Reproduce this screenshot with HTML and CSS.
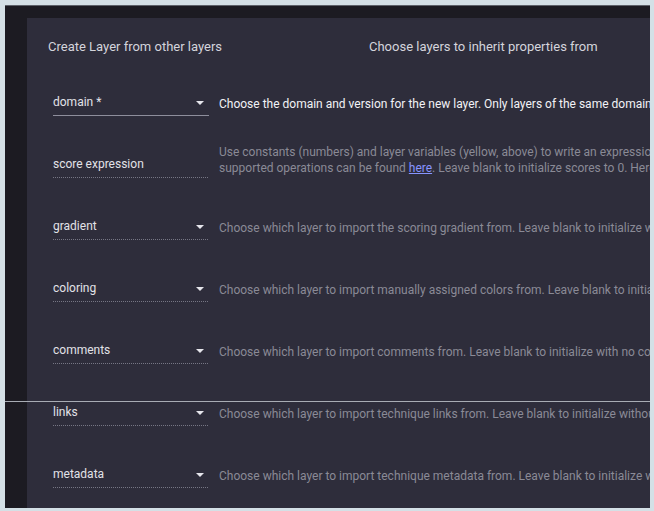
FILE: index.html
```html
<!DOCTYPE html>
<html>
<head>
<meta charset="utf-8">
<link rel="stylesheet" href="styles.css">
</head>
<body>
<div class="frame">
  <div class="card">
    <div class="header">
      <div class="title">Create Layer from other layers</div>
      <div class="subtitle">Choose layers to inherit properties from</div>
    </div>
    <div class="row">
      <div class="select solid"><span class="lbl">domain *</span><span class="arrow"></span></div>
      <div class="desc strong">Choose the domain and version for the new layer. Only layers of the same domain and version can be used to initialize the new layer.</div>
    </div>
    <div class="row">
      <div class="select dotted"><span class="lbl">score expression</span></div>
      <div class="desc two">Use constants (numbers) and layer variables (yellow, above) to write an expression to initialize scores in the new layer. A full list of<br>supported operations can be found <a class="link" href="#">here</a>. Leave blank to initialize scores to 0. Here is an example expression.</div>
    </div>
    <div class="row">
      <div class="select dotted"><span class="lbl">gradient</span><span class="arrow"></span></div>
      <div class="desc">Choose which layer to import the scoring gradient from. Leave blank to initialize with the default scoring gradient.</div>
    </div>
    <div class="row">
      <div class="select dotted"><span class="lbl">coloring</span><span class="arrow"></span></div>
      <div class="desc">Choose which layer to import manually assigned colors from. Leave blank to initialize with no colors.</div>
    </div>
    <div class="row">
      <div class="select dotted"><span class="lbl">comments</span><span class="arrow"></span></div>
      <div class="desc">Choose which layer to import comments from. Leave blank to initialize with no comments.</div>
    </div>
    <div class="row">
      <div class="select dotted"><span class="lbl">links</span><span class="arrow"></span></div>
      <div class="desc">Choose which layer to import technique links from. Leave blank to initialize without links.</div>
    </div>
    <div class="row">
      <div class="select dotted"><span class="lbl">metadata</span><span class="arrow"></span></div>
      <div class="desc">Choose which layer to import technique metadata from. Leave blank to initialize without metadata.</div>
    </div>
  </div>
  <div class="hline"></div>
</div>
</body>
</html>
```

FILE: styles.css
```css
html, body {
  margin: 0;
  padding: 0;
}
body {
  background: #d4e0e6;
  width: 654px;
  height: 511px;
  overflow: hidden;
  font-family: Roboto, "Liberation Sans", sans-serif;
}
.frame {
  position: relative;
  margin: 5px 4px 0 5px;
  height: 503px;
  background: #1c1b22;
  border-top: 1px solid #5d6169;
  box-sizing: border-box;
  padding: 12px 0 0 22px;
  overflow: hidden;
}
.card {
  background: #2e2d3b;
  height: 491px;
  overflow: hidden;
  padding-top: 20px;
  box-sizing: border-box;
  border-bottom: 1px solid #8a8f99;
}
.header {
  display: flex;
  height: 33px;
  font-size: 13px;
  line-height: 17px;
  color: #d4d4dc;
}
.title {
  width: 321px;
  padding-left: 21px;
  flex: none;
}
.subtitle {
  white-space: nowrap;
}
.row {
  display: grid;
  grid-template-columns: 156px 1fr;
  column-gap: 10px;
  align-items: center;
  height: 62px;
  padding-left: 26px;
}
.select {
  position: relative;
  height: 27px;
  box-sizing: border-box;
  font-size: 12px;
  line-height: 14px;
  color: #e2e2e8;
  padding-top: 6px;
}
.select.solid {
  border-bottom: 1.5px solid #8e8e9c;
}
.select.dotted {
  background-image: linear-gradient(to right, #767684 0, #767684 50%, transparent 50%);
  background-size: 2px 1px;
  background-repeat: repeat-x;
  background-position: left bottom;
}
.arrow {
  position: absolute;
  right: 5px;
  top: 12px;
  width: 0;
  height: 0;
  border-left: 4px solid transparent;
  border-right: 4px solid transparent;
  border-top: 4px solid #e6e6ec;
}
.desc {
  font-size: 12px;
  line-height: 16px;
  color: #8a8a96;
  white-space: nowrap;
  overflow: hidden;
  padding-top: 3px;
}
.desc.strong {
  color: #f2f2f6;
}
.desc.two {
  margin-bottom: 9px;
  padding-top: 0;
}
.link {
  color: #8794ff;
  text-decoration: underline;
}
.hline {
  position: absolute;
  left: 0;
  right: 0;
  top: 395px;
  height: 1px;
  background: #a8acb4;
}
```
